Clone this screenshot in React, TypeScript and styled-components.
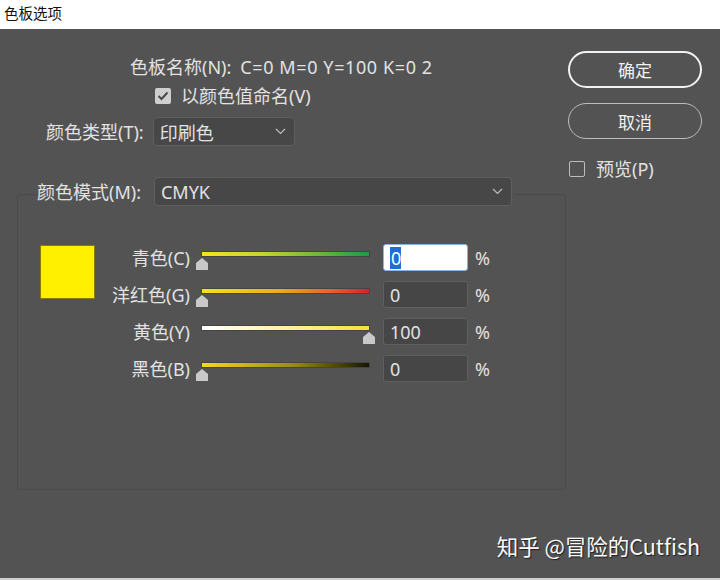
import React from "react";
import styled, { createGlobalStyle } from "styled-components";

const Global = createGlobalStyle`
  html, body { margin: 0; padding: 0; background: #535353; }
  body { font-family: "Noto Sans", "Noto Sans CJK SC", sans-serif; }
  #root { min-height: 580px; }
  * { box-sizing: border-box; }
`;

const Page = styled.div`
  width: 720px;
  height: 580px;
  background: #535353;
  display: flex;
  flex-direction: column;
  color: #e2e2e2;
  overflow: hidden;
`;

const TitleBar = styled.div`
  height: 29px;
  background: #ffffff;
  color: #111;
  font-family: "Noto Sans CJK SC", sans-serif;
  font-size: 14.5px;
  line-height: 26px;
  padding-left: 4px;
`;

const Body = styled.div`
  display: flex;
  padding-left: 17px;
`;

const LeftCol = styled.div`
  width: 549px;
  display: flex;
  flex-direction: column;
`;

const Text = styled.span`
  font-size: 18px;
  line-height: 22px;
  color: #e2e2e2;
  white-space: nowrap;
`;

const NameValue = styled(Text)`
  letter-spacing: 0.6px;
`;

const NameRow = styled.div`
  margin-top: 27px;
  padding-left: 113px;
  height: 22px;
  display: flex;
  gap: 9px;
`;

const CheckRow = styled.label<{ $indent: number }>`
  display: flex;
  align-items: center;
  gap: 10px;
  height: 22px;
  margin-top: 7px;
  padding-left: ${(p) => p.$indent}px;
`;

const CheckBox = styled.span<{ $checked?: boolean }>`
  width: 16px;
  height: 16px;
  flex: none;
  border-radius: 2px;
  display: inline-flex;
  align-items: center;
  justify-content: center;
  background: ${(p) => (p.$checked ? "#cfcfcf" : "transparent")};
  border: ${(p) => (p.$checked ? "none" : "1.5px solid #bdbdbd")};
`;

const FieldRow = styled.div<{ $gap: number }>`
  display: flex;
  align-items: center;
  gap: ${(p) => p.$gap}px;
`;

const TypeRow = styled(FieldRow)`
  margin-top: 10px;
  padding-left: 29px;
`;

const Select = styled.div<{ $w: number }>`
  width: ${(p) => p.$w}px;
  height: 29px;
  flex: none;
  background: #474747;
  border: 1px solid #5f5f5f;
  border-radius: 4px;
  display: flex;
  align-items: center;
  justify-content: space-between;
  padding: 0 8px 0 6px;
  font-size: 18px;
  color: #e2e2e2;
`;

const Group = styled.fieldset`
  margin: 31px 0 0 0;
  padding: 0 0 107px 0;
  border: 1px solid #4a4a4a;
  border-radius: 3px;
  width: 549px;
  min-inline-size: 0;
`;

const Legend = styled.legend`
  margin-left: 17px;
  padding: 0 2px 5px 2px;
`;

const GroupContent = styled.div`
  display: flex;
  align-items: flex-start;
  padding-top: 33px;
`;

const Swatch = styled.div`
  margin-left: 22px;
  margin-top: 1px;
  width: 55px;
  height: 54px;
  flex: none;
  background: #fff000;
  border: 1px solid #8a7c00;
`;

const Sliders = styled.div`
  display: grid;
  grid-template-columns: 101px 187px 92px auto;
  row-gap: 10px;
  align-items: center;
`;

const RowLabel = styled(Text)`
  text-align: right;
  padding-right: 6px;
`;

const SliderBox = styled.div`
  position: relative;
  height: 27px;
  width: 179px;
`;

const Track = styled.div<{ $bg: string }>`
  position: absolute;
  left: 6px;
  right: 6px;
  top: 8px;
  height: 4px;
  background: ${(p) => p.$bg};
  box-shadow: 0 0 0 0.5px rgba(0, 0, 0, 0.35);
`;

const Thumb = styled.div`
  position: absolute;
  top: 14px;
  width: 12px;
  height: 12px;
  background: #c9c9c9;
  clip-path: polygon(50% 0, 100% 42%, 100% 100%, 0 100%, 0 42%);
`;

const NumInput = styled.div<{ $focus?: boolean }>`
  width: 85px;
  height: 27px;
  border-radius: 3px;
  background: ${(p) => (p.$focus ? "#ffffff" : "#464646")};
  border: 1px solid ${(p) => (p.$focus ? "#8fb4dc" : "#5f5f5f")};
  display: flex;
  align-items: center;
  padding-left: 6px;
  font-size: 18px;
  color: #e2e2e2;
`;

const Selected = styled.span`
  background: #1f6fd0;
  color: #fff;
  line-height: 22px;
  padding: 0 0 0 1px;
`;

const Percent = styled(Text)``;

const RightCol = styled.div`
  margin-left: 2px;
  width: 134px;
  display: flex;
  flex-direction: column;
`;

const Button = styled.button<{ $primary?: boolean }>`
  width: 134px;
  height: ${(p) => (p.$primary ? 37 : 36)}px;
  border-radius: 20px;
  background: transparent;
  border: ${(p) => (p.$primary ? "2px solid #f2f2f2" : "1px solid #bcbcbc")};
  color: #f2f2f2;
  font-family: "Noto Sans CJK SC", sans-serif;
  font-size: 17px;
  padding: 0;
  margin-top: ${(p) => (p.$primary ? 22 : 15)}px;
`;

const PreviewRow = styled(CheckRow)`
  margin-top: 22px;
  height: 15px;
  gap: 11px;
`;

const Footer = styled.div`
  margin-top: 41px;
  display: flex;
  justify-content: flex-end;
  padding-right: 20px;
`;

const Watermark = styled.span`
  font-family: "Noto Sans CJK SC", sans-serif;
  font-size: 21.5px;
  line-height: 30px;
  color: #fafafa;
  text-shadow: 1px 1px 1px #1e1e1e;
  white-space: nowrap;
`;

const BottomEdge = styled.div`
  margin-top: auto;
  height: 2px;
  background: #cfcfcf;
`;

const Chevron = () => (
  <svg width="11" height="7" viewBox="0 0 11 7">
    <polyline points="1,1 5.5,5.5 10,1" fill="none" stroke="#bdbdbd" strokeWidth="1.2" />
  </svg>
);

const Check = () => (
  <svg width="12" height="10" viewBox="0 0 12 10">
    <polyline points="1.5,5 4.5,8 10.5,1.5" fill="none" stroke="#4a4a4a" strokeWidth="2" />
  </svg>
);

type Row = { label: string; value: number; bg: string; focus?: boolean };

const rows: Row[] = [
  {
    label: "青色(C)",
    value: 0,
    bg: "linear-gradient(to right, #f6e41a 0%, #c8d62a 35%, #6cb63c 70%, #1e9a45 100%)",
    focus: true,
  },
  {
    label: "洋红色(G)",
    value: 0,
    bg: "linear-gradient(to right, #f6e21a 0%, #f0aa22 45%, #e2622a 78%, #d42424 100%)",
  },
  {
    label: "黄色(Y)",
    value: 100,
    bg: "linear-gradient(to right, #ffffff 0%, #fff4b8 40%, #f6e236 100%)",
  },
  {
    label: "黑色(B)",
    value: 0,
    bg: "linear-gradient(to right, #f0dc1a 0%, #9a8a12 55%, #151505 100%)",
  },
];

export default function App() {
  return (
    <Page>
      <Global />
      <TitleBar>色板选项</TitleBar>
      <Body>
        <LeftCol>
          <NameRow>
            <Text>色板名称(N):</Text>
            <NameValue>C=0 M=0 Y=100 K=0 2</NameValue>
          </NameRow>
          <CheckRow $indent={138}>
            <CheckBox $checked>
              <Check />
            </CheckBox>
            <Text>以颜色值命名(V)</Text>
          </CheckRow>
          <TypeRow $gap={9}>
            <Text>颜色类型(T):</Text>
            <Select $w={142}>
              <span>印刷色</span>
              <Chevron />
            </Select>
          </TypeRow>
          <Group>
            <Legend>
              <FieldRow $gap={13}>
                <Text>颜色模式(M):</Text>
                <Select $w={358}>
                  <span>CMYK</span>
                  <Chevron />
                </Select>
              </FieldRow>
            </Legend>
            <GroupContent>
              <Swatch />
              <Sliders>
                {rows.map((r) => (
                  <React.Fragment key={r.label}>
                    <RowLabel>{r.label}</RowLabel>
                    <SliderBox>
                      <Track $bg={r.bg} />
                      <Thumb style={{ left: `${(r.value / 100) * 167}px` }} />
                    </SliderBox>
                    <NumInput $focus={r.focus}>
                      {r.focus ? <Selected>{r.value}</Selected> : r.value}
                    </NumInput>
                    <Percent>%</Percent>
                  </React.Fragment>
                ))}
              </Sliders>
            </GroupContent>
          </Group>
        </LeftCol>
        <RightCol>
          <Button $primary>确定</Button>
          <Button>取消</Button>
          <PreviewRow $indent={1}>
            <CheckBox />
            <Text>预览(P)</Text>
          </PreviewRow>
        </RightCol>
      </Body>
      <Footer>
        <Watermark>知乎 @冒险的Cutfish</Watermark>
      </Footer>
      <BottomEdge />
    </Page>
  );
}
